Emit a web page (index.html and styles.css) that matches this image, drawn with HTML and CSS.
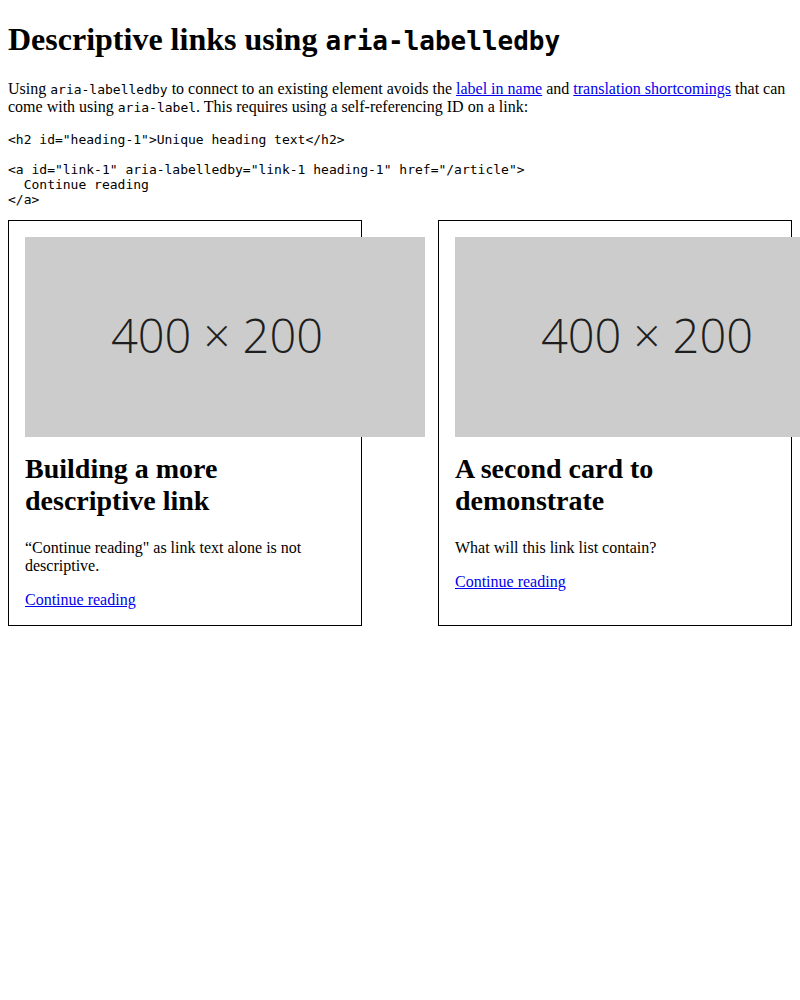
FILE: index.html
```html
<!DOCTYPE html>
<html lang="en">
<head>
<meta charset="utf-8">
<title>Descriptive links using aria-labelledby</title>
<link rel="stylesheet" href="styles.css">
</head>
<body>
<h1>Descriptive links using <code>aria-labelledby</code></h1>
<p>Using <code>aria-labelledby</code> to connect to an existing element avoids the <a href="#">label in name</a> and <a href="#">translation shortcomings</a> that can come with using <code>aria-label</code>. This requires using a self-referencing ID on a link:</p>
<pre>&lt;h2 id="heading-1"&gt;Unique heading text&lt;/h2&gt;

&lt;a id="link-1" aria-labelledby="link-1 heading-1" href="/article"&gt;
  Continue reading
&lt;/a&gt;</pre>
<div class="cards">
  <article class="card">
    <div class="thumb"><span class="thumb-label">400 × 200</span></div>
    <h2 class="card-title">Building a more descriptive link</h2>
    <p class="card-text">“Continue reading" as link text alone is not descriptive.</p>
    <a class="card-link" href="#">Continue reading</a>
  </article>
  <article class="card">
    <div class="thumb"><span class="thumb-label">400 × 200</span></div>
    <h2 class="card-title">A second card to demonstrate</h2>
    <p class="card-text">What will this link list contain?</p>
    <a class="card-link" href="#">Continue reading</a>
  </article>
</div>
</body>
</html>
```

FILE: styles.css
```css
body {
  margin: 0;
  padding: 8px;
  font-family: "Liberation Serif", "Times New Roman", serif;
  font-size: 16px;
  color: #000;
  background: #fff;
}
h1 {
  font-size: 32px;
  margin: 13.44px 0 21.44px;
}
code, pre {
  font-family: "DejaVu Sans Mono", monospace;
  font-size: 0.8125em;
}
pre {
  font-size: 13px;
  margin: 13px 0;
}
a {
  color: #0000ee;
}
.cards {
  display: grid;
  grid-template-columns: 1fr 1fr;
  column-gap: 76px;
}
.card {
  border: 1px solid #000;
  padding: 16px;
  display: flex;
  flex-direction: column;
  align-items: flex-start;
  min-width: 0;
}
.thumb {
  width: 400px;
  height: 200px;
  flex-shrink: 0;
  background: #cccccc;
  display: flex;
  align-items: center;
  justify-content: center;
  padding: 0 16px 4px 0;
  box-sizing: border-box;
}
.thumb-label {
  font-family: "Open Sans", sans-serif;
  font-weight: 300;
  font-size: 47px;
  color: #1e1e1e;
}
.card-title {
  font-size: 28px;
  margin: 16px 0 22px;
}
.card-text {
  margin: 0 0 16px;
}
```
